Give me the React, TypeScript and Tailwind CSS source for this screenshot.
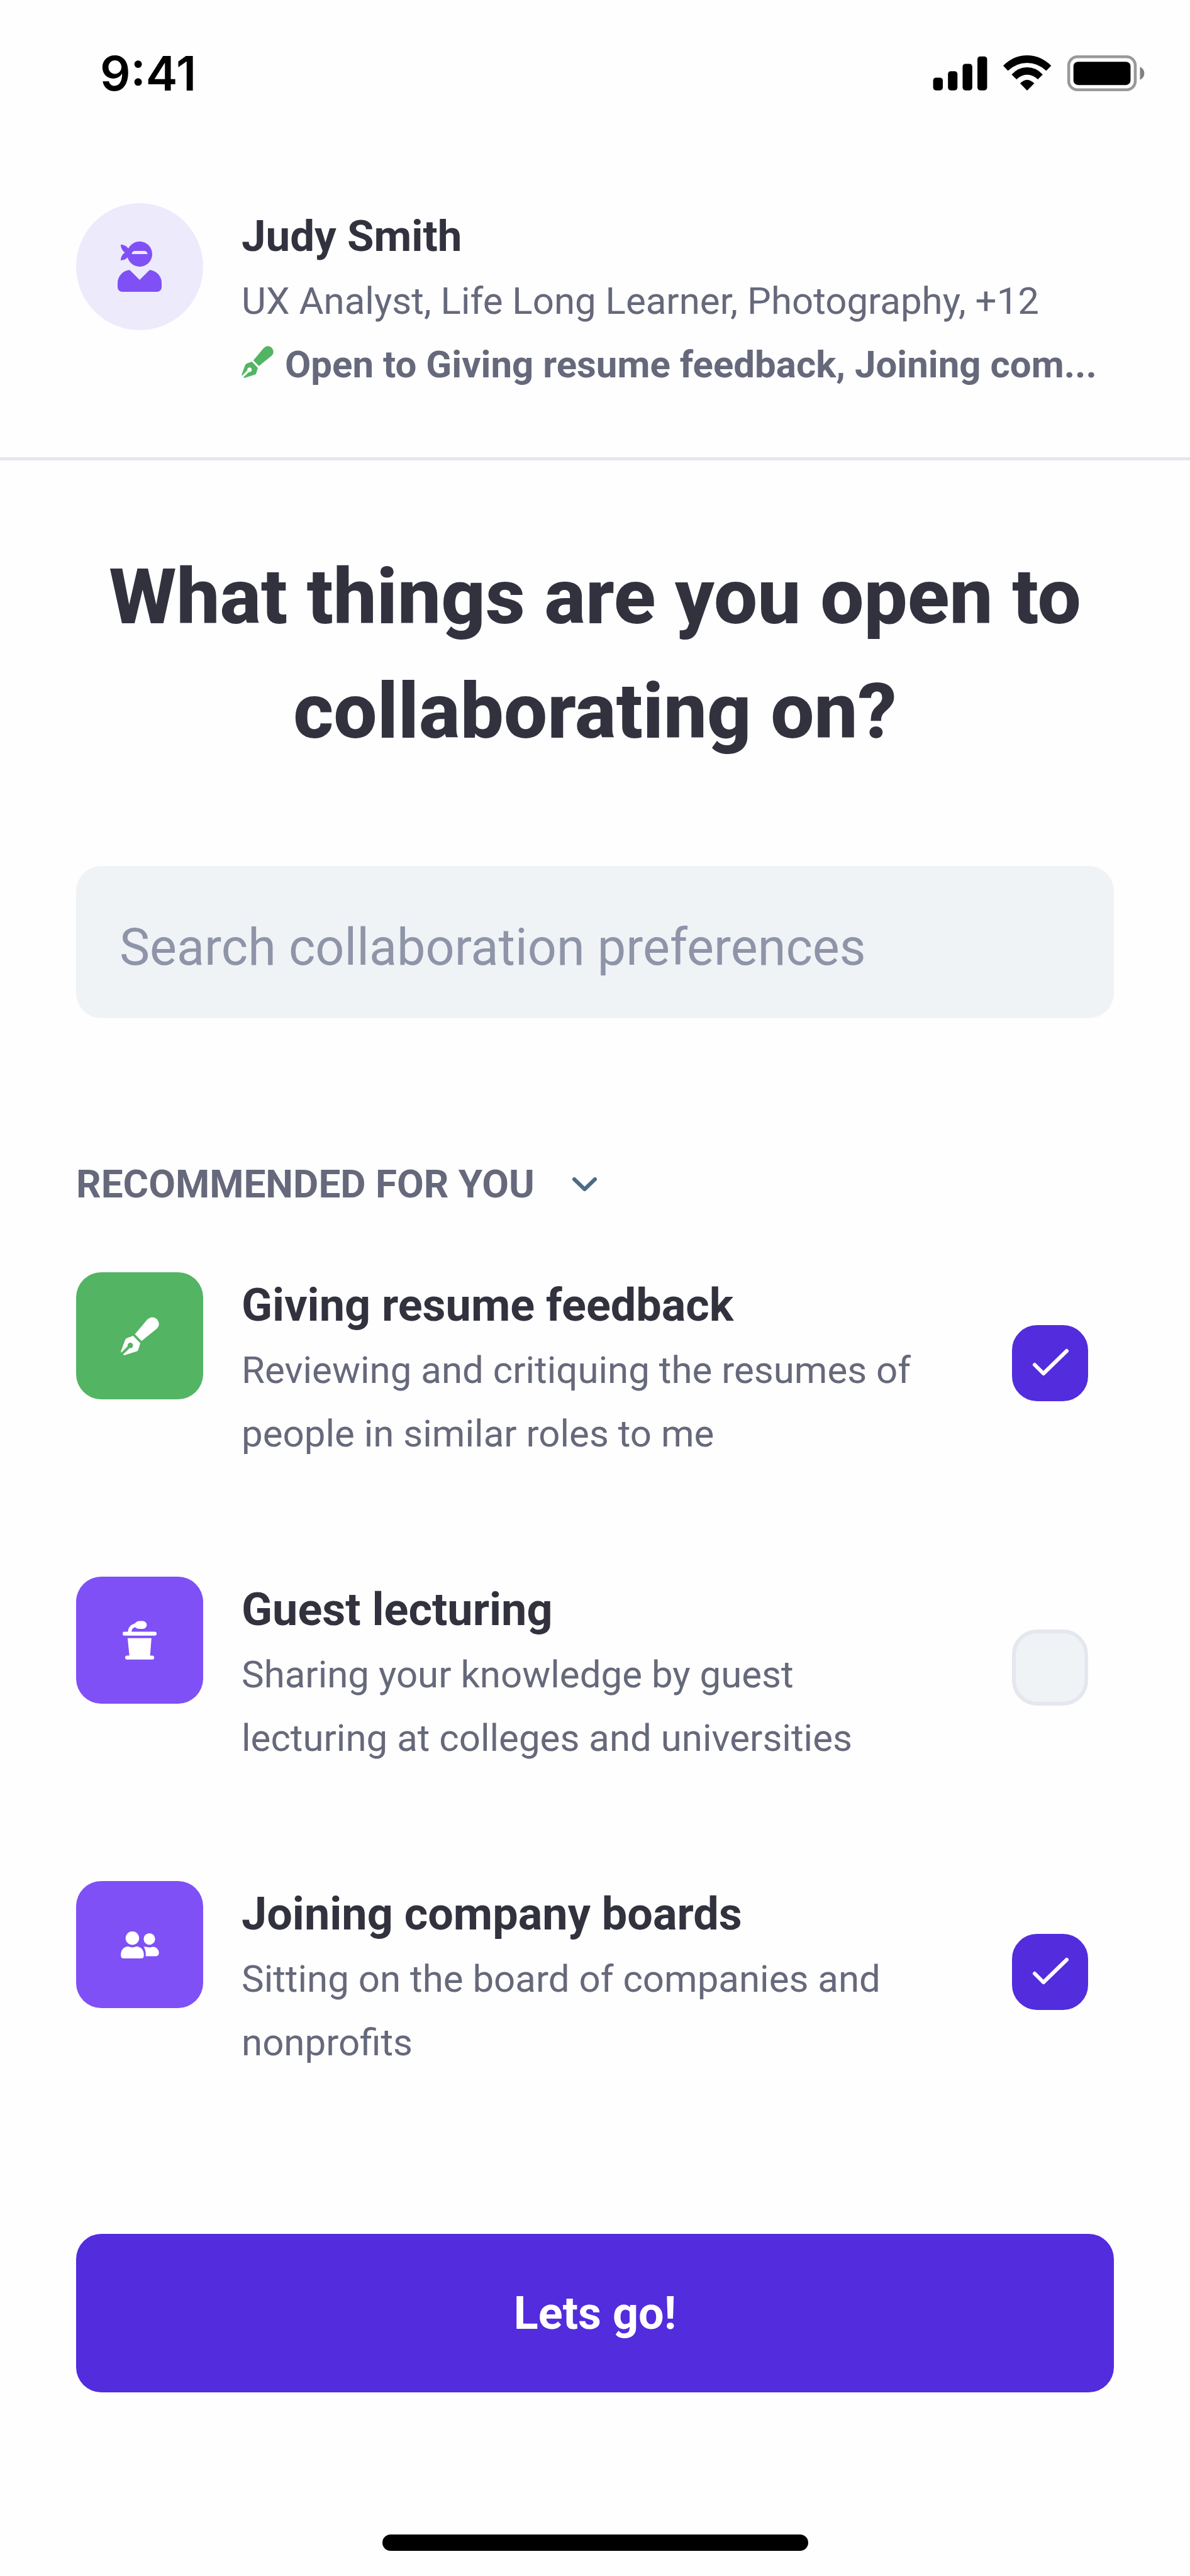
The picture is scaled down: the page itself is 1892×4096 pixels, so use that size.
import { useState } from 'react'
import { FaUserNinja } from 'react-icons/fa'

function PenIcon({ className }: { className: string }) {
  return (
    <svg viewBox="0 0 155 155" fill="currentColor" className={className} aria-hidden="true">
      <path d="M57 70 L107 11 Q127 -8 146 9 Q163 29 146 47 L84 97 Z" />
      <path d="M1 138 L18 92 Q20 87 26 85 L50 76 L79 106 L71 132 Q70 137 64 139 L14 155 L9 152 L36 126 A11 11 0 1 0 28 118 L2 145 Z" />
    </svg>
  )
}

function PodiumIcon({ className }: { className: string }) {
  return (
    <svg viewBox="0 0 165 188" fill="currentColor" className={className} aria-hidden="true">
      <path d="M34 56 C34 36 46 23 66 21" fill="none" stroke="currentColor" strokeWidth="17" />
      <path d="M58 14 Q68 1 82 1 H98 A19 19 0 0 1 98 39 H82 Q68 39 60 30 Z" />
      <rect x="0" y="53" width="165" height="19" rx="9" />
      <path d="M24 84 H140 L133 172 H33 Z" />
      <rect x="12" y="169" width="141" height="19" rx="9" />
    </svg>
  )
}

function PeopleIcon({ className }: { className: string }) {
  return (
    <svg viewBox="0 0 186 132" fill="currentColor" className={className} aria-hidden="true">
      <circle cx="56" cy="33" r="33" />
      <circle cx="139" cy="37" r="28" />
      <path d="M36 74 Q56 82 76 74 C98 75 112 92 112 112 V119 Q112 132 98 132 H14 Q0 132 0 119 V112 C0 92 14 75 36 74 Z" />
      <path d="M111 75 H122 Q139 82 156 75 C176 76 186 92 186 105 Q184 121 170 121 H121 C123 103 120 88 111 75 Z" />
    </svg>
  )
}

function StatusIcons() {
  return (
    <svg viewBox="0 0 1025 174" className="h-[57px] w-[337px]" aria-hidden="true">
      <rect x="0" y="108" width="47" height="62" rx="14" />
      <rect x="72" y="77" width="46" height="93" rx="14" />
      <rect x="143" y="41" width="47" height="129" rx="14" />
      <rect x="215" y="5" width="47" height="165" rx="14" />
      <path d="M340 50 Q391 0 456 0 Q521 0 573 50 L549 75 Q507 37 456 37 Q405 37 363 75 Z" />
      <path d="M381 93 Q412 58 456 58 Q500 58 532 93 L508 117 Q485 94 456 94 Q428 94 405 117 Z" />
      <path d="M422 136 Q456 102 491 136 L456 171 Z" />
      <rect x="658" y="7" width="323" height="160" rx="42" fill="none" stroke="#999" strokeWidth="14" />
      <rect x="681" y="31" width="277" height="113" rx="22" />
      <path d="M1004 56 Q1025 66 1025 87 Q1025 108 1004 119 Z" fill="#808080" />
    </svg>
  )
}

const preferences = [
  {
    id: 'resume',
    title: 'Giving resume feedback',
    desc: 'Reviewing and critiquing the resumes of people in similar roles to me',
    color: 'bg-[#53b463]',
    icon: <PenIcon className="size-[61px]" />,
    checked: true,
  },
  {
    id: 'lecturing',
    title: 'Guest lecturing',
    desc: 'Sharing your knowledge by guest lecturing at colleges and universities',
    color: 'bg-[#7f50f6]',
    icon: <PodiumIcon className="h-[62px] w-[54px]" />,
    checked: false,
  },
  {
    id: 'boards',
    title: 'Joining company boards',
    desc: 'Sitting on the board of companies and nonprofits',
    color: 'bg-[#7f50f6]',
    icon: <PeopleIcon className="h-[43px] w-[61px]" />,
    checked: true,
  },
]

export default function App() {
  const [selected, setSelected] = useState(preferences.filter((p) => p.checked).map((p) => p.id))

  const toggle = (id: string) =>
    setSelected(selected.includes(id) ? selected.filter((s) => s !== id) : [...selected, id])

  return (
    <div className="min-h-screen bg-[#fefefe] font-['Roboto',sans-serif] text-[60px] leading-[101px] text-[#66697b]">
      <div className="flex items-center justify-between pt-[88px] pr-[72px] pl-[159px]">
        <span className="font-['Inter',sans-serif] text-[76px] leading-[57px] font-semibold text-black">9:41</span>
        <StatusIcons />
      </div>

      <header className="flex gap-[61px] border-b-[5px] border-[#e5e7ee] px-[121px] pt-[178px] pb-[97px]">
        <div className="flex size-[202px] shrink-0 items-center justify-center rounded-full bg-[#edeafc] text-[#7f50f6]">
          <FaUserNinja className="size-20" />
        </div>
        <div className="min-w-0 flex-1 whitespace-nowrap">
          <p className="text-[69px] leading-[105px] font-bold text-[#32323f]">Judy Smith</p>
          <p>UX Analyst, Life Long Learner, Photography, +12</p>
          <p className="flex items-center gap-[18px] font-bold">
            <PenIcon className="mb-2 size-[51px] shrink-0 text-[#53b463]" />
            Open to Giving resume feedback, Joining com...
          </p>
        </div>
      </header>

      <main className="px-[121px] pt-[126px]">
        <h1 className="text-center text-[123px] leading-[182px] font-extrabold text-[#32323f]">
          What things are you open to collaborating on?
        </h1>

        <input
          type="text"
          aria-label="Search collaboration preferences"
          placeholder="Search collaboration preferences"
          className="mt-[155px] block h-[242px] w-full rounded-[40px] bg-[#eff3f6] px-[69px] pt-4 text-[81px] leading-[101px] outline-none placeholder:text-[#8f94a9]"
        />

        <button type="button" className="mt-[213px] flex items-center gap-[60px] text-[62px] font-bold">
          RECOMMENDED FOR YOU
          <svg viewBox="0 0 39 22" fill="none" className="h-[22px] w-[39px]" aria-hidden="true">
            <path d="M3 3 L19.5 19 L36 3" stroke="#4b6c86" strokeWidth="6" strokeLinecap="round" strokeLinejoin="round" />
          </svg>
        </button>

        <ul className="mt-[90px] flex flex-col gap-[177px]">
          {preferences.map(({ id, title, desc, color, icon }) => (
            <li key={id} className="flex items-start">
              <div className={`flex size-[202px] shrink-0 items-center justify-center rounded-[40px] text-white ${color}`}>
                {icon}
              </div>
              <label htmlFor={id} className="ml-[61px] flex-1">
                <span className="block text-[72px] leading-[105px] font-bold text-[#32323f]">{title}</span>
                <span className="block">{desc}</span>
              </label>
              <div className="mt-[84px] mr-[41px] ml-[135px] grid shrink-0">
                <input
                  id={id}
                  type="checkbox"
                  checked={selected.includes(id)}
                  onChange={() => toggle(id)}
                  className="peer col-start-1 row-start-1 size-[121px] appearance-none rounded-[40px] border-6 border-[#e4e7ee] bg-[#eff3f6] checked:border-[#522cdd] checked:bg-[#522cdd]"
                />
                <svg
                  viewBox="0 0 121 121"
                  fill="none"
                  className="pointer-events-none invisible col-start-1 row-start-1 size-[121px] peer-checked:visible"
                  aria-hidden="true"
                >
                  <path d="M36 63 L50 77 L87 41" stroke="white" strokeWidth="6" strokeLinecap="round" strokeLinejoin="round" />
                </svg>
              </div>
            </li>
          ))}
        </ul>

        <button type="button" className="mt-[254px] h-[252px] w-full rounded-[40px] bg-[#522cdd] text-[72px] font-bold text-white">
          Lets go!
        </button>
      </main>

      <div className="flex justify-center pt-[226px] pb-[38px]">
        <div className="h-[26px] w-[677px] rounded-full bg-black" />
      </div>
    </div>
  )
}
